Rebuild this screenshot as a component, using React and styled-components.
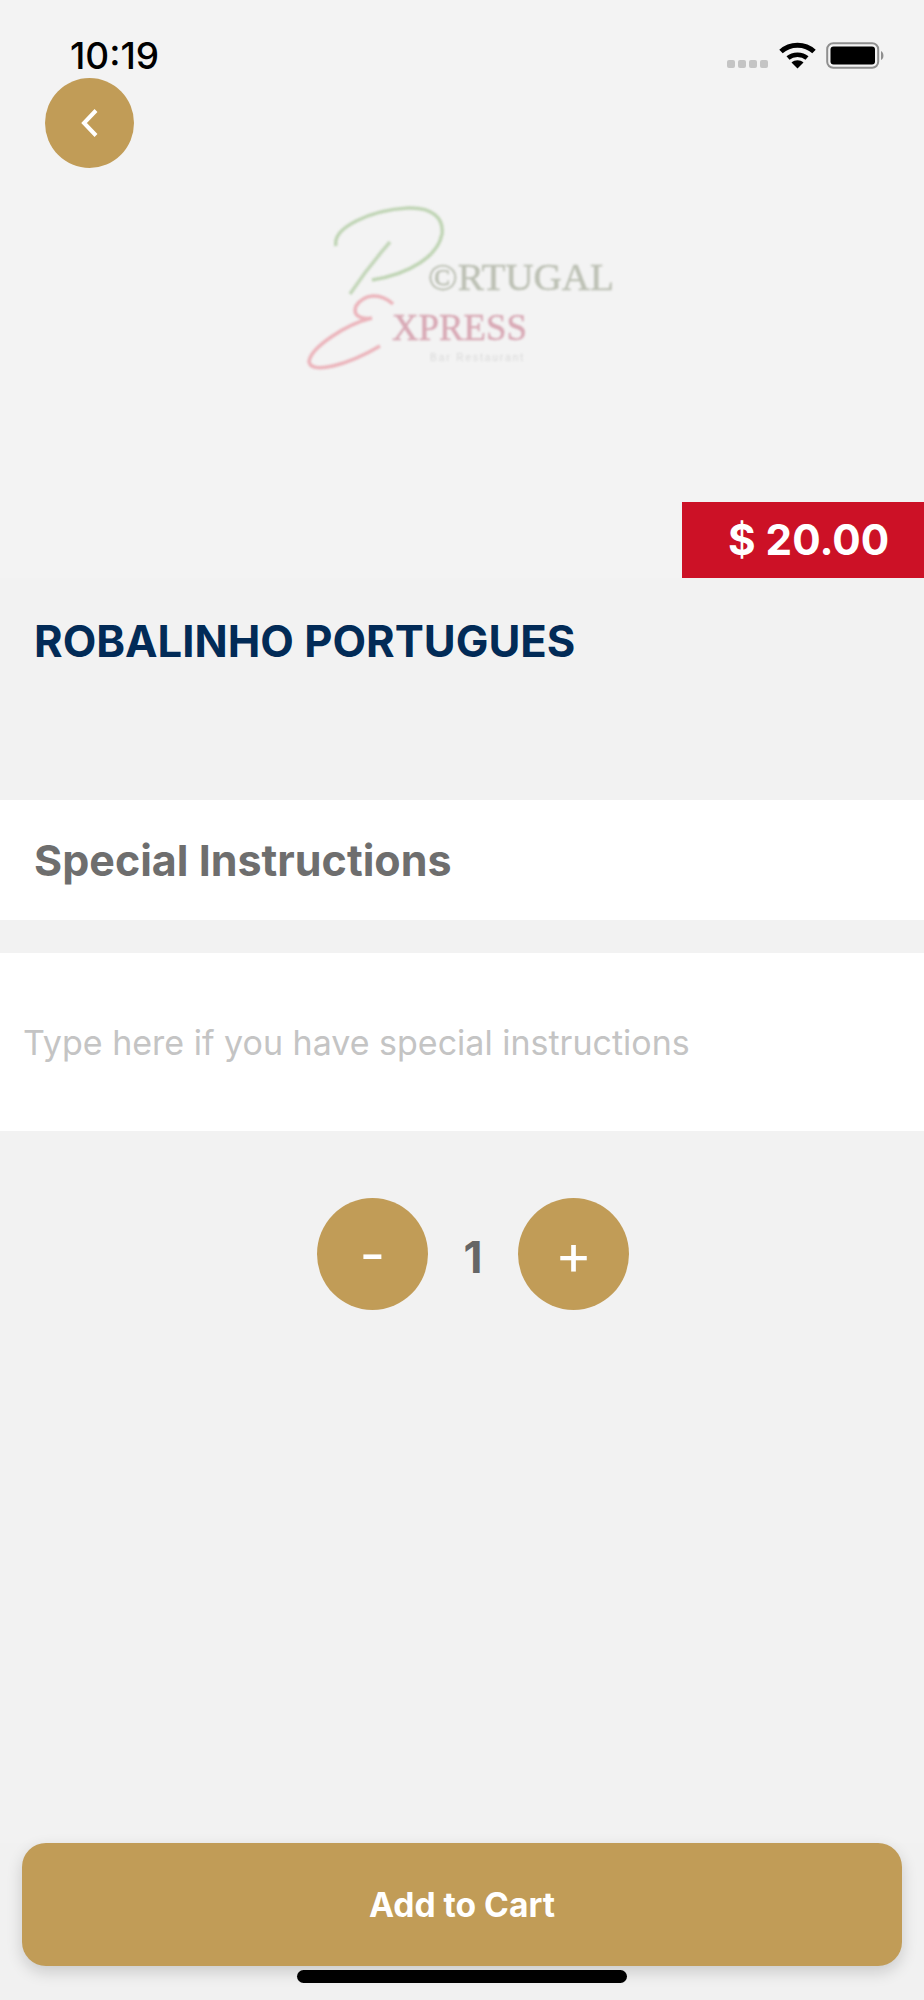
import React from 'react';
import styled, {createGlobalStyle} from 'styled-components';

const GlobalStyle = createGlobalStyle`
    html, body {
        margin: 0;
        padding: 0;
        background: #f2f2f2;
        font-family: Inter, "Liberation Sans", sans-serif;
    }
`;

const gold = '#c19c57';

const Page = styled.div`
    width: 924px;
    height: 2000px;
    display: flex;
    flex-direction: column;
    background: #f2f2f2;
    overflow: hidden;
`;

const Hero = styled.div`
    height: 578px;
    display: flex;
    flex-direction: column;
    background: #f3f3f3;
`;

const StatusBar = styled.div`
    height: 78px;
    box-sizing: border-box;
    padding: 36px 38px 0 70px;
    display: flex;
    justify-content: space-between;
    align-items: flex-start;
`;

const Time = styled.div`
    font-size: 37px;
    line-height: 40px;
    font-weight: 500;
    color: #000;
`;

const StatusIcons = styled.div`
    display: flex;
    align-items: flex-end;
    padding-top: 6px;
`;

const SignalDots = styled.div`
    display: flex;
    gap: 3px;
    margin-right: 11px;
    margin-bottom: 1px;
`;

const SignalDot = styled.span`
    width: 8px;
    height: 8px;
    border-radius: 2px;
    background: #c4c4c4;
`;

const BackButton = styled.button`
    width: 89px;
    height: 90px;
    margin-left: 45px;
    padding: 0;
    border: none;
    border-radius: 50%;
    background: ${gold};
    display: flex;
    align-items: center;
    justify-content: center;
`;

const LogoRow = styled.div`
    height: 190px;
    margin-top: 22px;
    padding-left: 280px;
`;

const Logo = styled.svg`
    display: block;
    filter: blur(0.9px);
`;

const PriceRow = styled.div`
    margin-top: auto;
    display: flex;
    justify-content: flex-end;
`;

const Price = styled.div`
    width: 242px;
    height: 76px;
    box-sizing: border-box;
    padding-left: 46px;
    background: #cc1126;
    color: #fff;
    font-size: 42.2px;
    font-weight: 700;
    line-height: 76px;
    white-space: nowrap;
`;

const Title = styled.h1`
    margin: 39px 0 0;
    padding-left: 34px;
    height: 183px;
    font-size: 43.6px;
    line-height: 50px;
    font-weight: 700;
    color: #022b57;
`;

const SectionHead = styled.div`
    height: 120px;
    box-sizing: border-box;
    padding-left: 34px;
    background: #fff;
    color: #6e6e6e;
    font-size: 43px;
    font-weight: 700;
    line-height: 120px;
`;

const InstructionsBox = styled.div`
    height: 178px;
    margin-top: 33px;
    box-sizing: border-box;
    padding-left: 23px;
    background: #fff;
`;

const InstructionsInput = styled.input`
    width: 100%;
    height: 178px;
    padding: 0;
    border: none;
    outline: none;
    background: transparent;
    font-family: inherit;
    font-size: 34px;
    color: #333;

    &::placeholder {
        color: #c4c4c4;
        opacity: 1;
    }
`;

const Counter = styled.div`
    margin-top: 67px;
    padding-left: 317px;
    display: flex;
    align-items: center;
`;

const RoundButton = styled.button`
    width: 111px;
    height: 112px;
    padding: 0;
    border: none;
    border-radius: 50%;
    background: ${gold};
    color: #fff;
    font-family: inherit;
    font-size: ${props => props.$size}px;
    font-weight: 400;
    line-height: 1;
    display: flex;
    align-items: center;
    justify-content: center;
`;

const Quantity = styled.div`
    width: 90px;
    padding-top: 6px;
    text-align: center;
    color: #666;
    font-size: 44px;
    font-weight: 700;
`;

const Footer = styled.div`
    margin-top: auto;
    padding: 0 22px 17px;
    display: flex;
    flex-direction: column;
    align-items: center;
    background: #f1f1f1;
`;

const CartButton = styled.button`
    width: 880px;
    height: 123px;
    border: none;
    border-radius: 24px;
    background: ${gold};
    color: #fff;
    font-family: inherit;
    font-size: 33.6px;
    font-weight: 700;
    box-shadow: 0 6px 16px rgba(0, 0, 0, 0.16);
`;

const HomeIndicator = styled.div`
    width: 330px;
    height: 13px;
    margin-top: 4px;
    border-radius: 7px;
    background: #000;
    position: relative;
`;

const WifiIcon = () => (
    <svg width="37" height="27" viewBox="0 0 37 27" style={{marginRight: 10}}>
        <path d="M2 9.5 C11 1 26 1 35 9.5" fill="none" stroke="#000" strokeWidth="5"/>
        <path d="M9 16 C14 11.5 23 11.5 28 16" fill="none" stroke="#000" strokeWidth="4.5"/>
        <path d="M12.5 20.5 L18.5 26.5 L24.5 20.5 C21 17.5 16 17.5 12.5 20.5 Z" fill="#000"/>
    </svg>
);

const BatteryIcon = () => (
    <svg width="60" height="27" viewBox="0 0 60 27">
        <rect x="1.2" y="1.2" width="51" height="24.6" rx="6" fill="none" stroke="#8f8f8f" strokeWidth="2"/>
        <rect x="4.5" y="4.5" width="44.5" height="18" rx="3" fill="#000"/>
        <path d="M55 9 C58 10 58.5 17 55 18 Z" fill="#8f8f8f"/>
    </svg>
);

const Chevron = () => (
    <svg width="18" height="30" viewBox="0 0 18 30">
        <path d="M15 2.5 L3 15 L15 27.5" fill="none" stroke="#fff" strokeWidth="4"/>
    </svg>
);

const LogoArt = () => (
    <Logo width="360" height="190" viewBox="0 0 360 190">
        <path d="M56 56 C52 38 90 20 128 18 C152 17 164 28 162 44 C158 66 130 84 92 90" fill="none" stroke="#bfd4b4" strokeWidth="3.5"/>
        <path d="M110 52 C96 68 82 86 70 104" fill="none" stroke="#c3d6b9" strokeWidth="3.5"/>
        <text x="148" y="100" fontFamily="Liberation Serif" fontSize="37" fill="#bcc0b4" stroke="#bcc0b4" strokeWidth="0.5" textLength="186" lengthAdjust="spacingAndGlyphs">©RTUGAL</text>
        <path d="M113 114 C100 102 84 104 76 116 C72 126 82 130 92 128 C66 134 30 158 29 172 C32 184 66 176 100 156" fill="none" stroke="#ebb4bb" strokeWidth="3.5"/>
        <text x="112" y="150" fontFamily="Liberation Serif" fontSize="37" fill="#d8a9b5" stroke="#d8a9b5" strokeWidth="0.5" textLength="135" lengthAdjust="spacingAndGlyphs">XPRESS</text>
        <text x="150" y="171" fontFamily="Liberation Sans" fontSize="10" fill="#d8d8d8" textLength="93">Bar Restaurant</text>
    </Logo>
);

export default class App extends React.Component {
    render() {
        return (
            <Page>
                <GlobalStyle/>
                <Hero>
                    <StatusBar>
                        <Time>10:19</Time>
                        <StatusIcons>
                            <SignalDots>
                                <SignalDot/><SignalDot/><SignalDot/><SignalDot/>
                            </SignalDots>
                            <WifiIcon/>
                            <BatteryIcon/>
                        </StatusIcons>
                    </StatusBar>
                    <BackButton><Chevron/></BackButton>
                    <LogoRow><LogoArt/></LogoRow>
                    <PriceRow><Price>$ 20.00</Price></PriceRow>
                </Hero>
                <Title>ROBALINHO PORTUGUES</Title>
                <SectionHead>Special Instructions</SectionHead>
                <InstructionsBox>
                    <InstructionsInput placeholder="Type here if you have special instructions"/>
                </InstructionsBox>
                <Counter>
                    <RoundButton $size={56}>-</RoundButton>
                    <Quantity>1</Quantity>
                    <RoundButton $size={56}>+</RoundButton>
                </Counter>
                <Footer>
                    <CartButton>Add to Cart</CartButton>
                    <HomeIndicator/>
                </Footer>
            </Page>
        )
    }
}
